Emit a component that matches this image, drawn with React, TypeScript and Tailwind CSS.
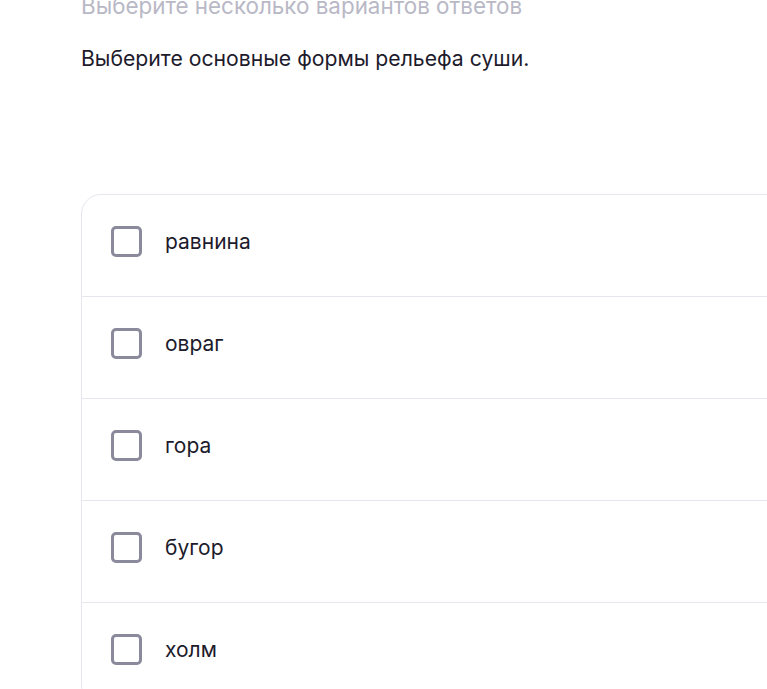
import React from "react";

const items = ["равнина", "овраг", "гора", "бугор", "холм"];

export default function App() {
  return (
    <div
      className="w-[767px] h-[689px] overflow-hidden bg-white"
      style={{ fontFamily: "Inter, 'Noto Sans', sans-serif" }}
    >
      <div className="pl-[81px] mt-[-8px]">
        <div className="text-[22.4px] leading-[28px] text-[#b9b8c6] whitespace-nowrap">
          Выберите несколько вариантов ответов
        </div>
        <div className="mt-[24px] text-[21.2px] leading-[28px] text-[#1d1b2c] whitespace-nowrap">
          Выберите основные формы рельефа суши.
        </div>
        <div className="mt-[122px] w-[760px] rounded-tl-[20px] rounded-bl-[20px] border border-[#e6e6ee]">
          {items.map((t, i) => (
            <div
              key={t}
              className={
                "flex items-center gap-[23px] pl-[29px] pt-[31px] pb-[39px] " +
                (i > 0 ? "border-t border-[#e6e6ee]" : "")
              }
            >
              <div className="w-[31px] h-[31px] rounded-[5px] border-[3px] border-[#8b8a9d] bg-white shrink-0" />
              <span className="text-[21px] leading-[28px] text-[#1d1b2c]">{t}</span>
            </div>
          ))}
        </div>
      </div>
    </div>
  );
}
